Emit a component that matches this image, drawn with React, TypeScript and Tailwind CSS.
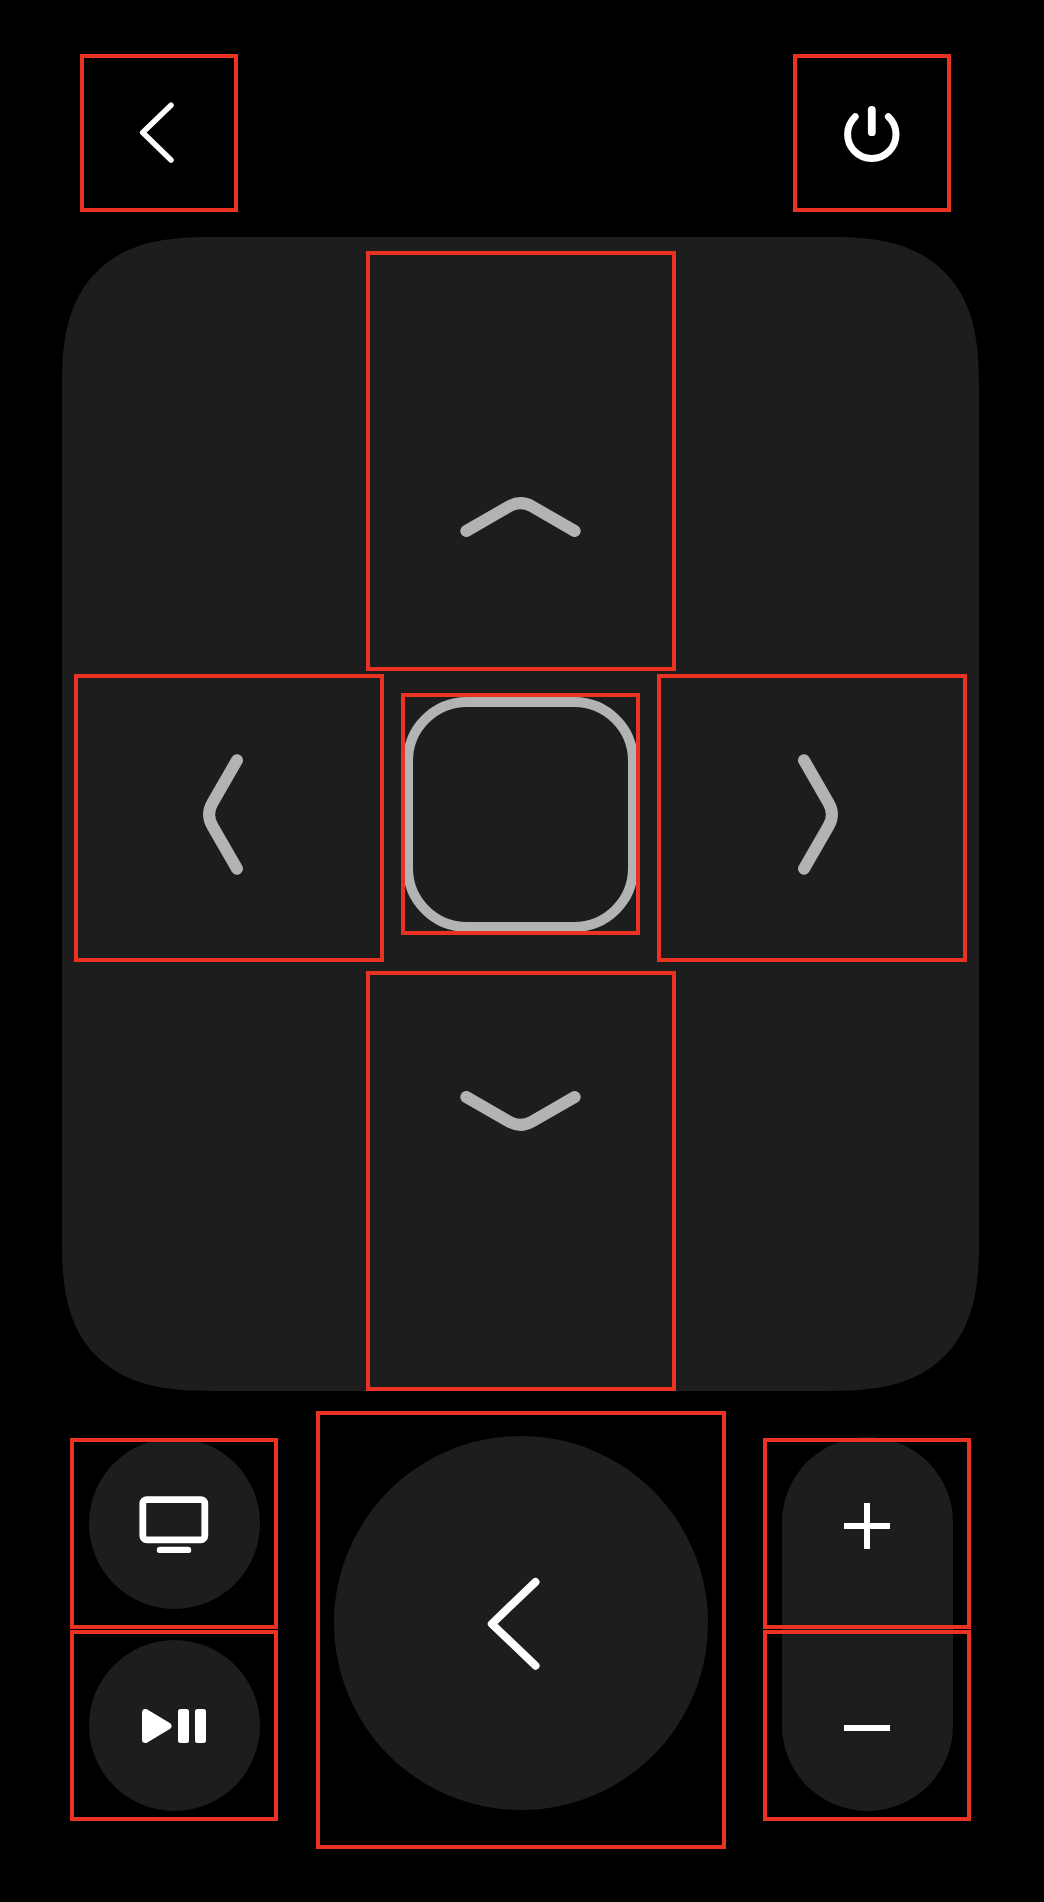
import type { ReactNode } from "react";

type PadProps = {
  label: string;
  className: string;
  children: ReactNode;
};

/* Touch area with its red bounds drawn over whatever it holds. */
function Pad({ label, className, children }: PadProps) {
  return (
    <button
      type="button"
      aria-label={label}
      className={`flex min-w-0 cursor-pointer justify-center outline-4 -outline-offset-4 outline-[#ea3323] ${className}`}
    >
      {children}
    </button>
  );
}

function Disc({ className, children }: { className: string; children: ReactNode }) {
  return (
    <span className={`flex aspect-square max-w-full items-center justify-center rounded-full bg-[#1d1d1e] ${className}`}>
      {children}
    </span>
  );
}

function BendVertical({ d }: { d: string }) {
  return (
    <svg width="121" height="40" viewBox="0 0 121 40" fill="none" stroke="#b3b3b3" strokeWidth="12" strokeLinecap="round" aria-hidden="true">
      <path d={d} />
    </svg>
  );
}

function BendHorizontal({ d }: { d: string }) {
  return (
    <svg width="40" height="121" viewBox="0 0 40 121" fill="none" stroke="#b3b3b3" strokeWidth="12" strokeLinecap="round" aria-hidden="true">
      <path d={d} />
    </svg>
  );
}

function Header() {
  return (
    <header className="flex justify-between pr-[93px] pl-20">
      <Pad label="Back" className="size-[158px] items-center">
        <svg width="64" height="64" viewBox="0 0 64 64" fill="none" stroke="#fff" strokeWidth="5.5" strokeLinecap="round" strokeLinejoin="round" aria-hidden="true">
          <path d="M44 4.2 15.7 31.6 44 59" />
        </svg>
      </Pad>
      <Pad label="Power" className="size-[158px] items-center">
        <svg width="64" height="64" viewBox="0 0 64 64" fill="none" stroke="#fff" strokeLinecap="round" aria-hidden="true">
          <path strokeWidth="7" d="M15.2 15.7a24.2 24.2 0 1 0 33.2 0" />
          <path strokeWidth="7.8" d="M31.8 8.8v22.4" />
        </svg>
      </Pad>
    </header>
  );
}

function DirectionPad() {
  return (
    <section
      aria-label="Direction pad"
      className="mt-[25px] mr-[65px] ml-[62px] flex flex-col items-center rounded-[115px] bg-[#1d1d1e] px-3 pt-3.5 supports-[corner-shape:squircle]:rounded-[150px] supports-[corner-shape:squircle]:[corner-shape:superellipse(1.4)]"
    >
      <Pad label="Up" className="h-[420px] w-[310px] max-w-full items-start pt-[246px]">
        <BendVertical d="M6.3 34 49 9.4Q60.5 2.8 72 9.4L114.7 34" />
      </Pad>
      <div className="mt-[3px] flex w-full items-center justify-between">
        <Pad label="Left" className="h-72 w-[310px] items-center pr-3 pb-2">
          <BendHorizontal d="M34 6.3 9.4 49Q2.8 60.5 9.4 72L34 114.7" />
        </Pad>
        <Pad label="Select" className="mb-2 h-[242px] w-[239px] items-center">
          <span className="size-[235px] max-w-full rounded-[64px] border-10 border-[#b3b3b3]" />
        </Pad>
        <Pad label="Right" className="h-72 w-[310px] items-center pb-2 pl-3">
          <BendHorizontal d="M6 6.3 30.6 49Q37.2 60.5 30.6 72L6 114.7" />
        </Pad>
      </div>
      <Pad label="Down" className="mt-[9px] h-[420px] w-[310px] max-w-full items-start pt-[120px]">
        <BendVertical d="M6.3 6 49 30.6Q60.5 37.2 72 30.6L114.7 6" />
      </Pad>
    </section>
  );
}

function Controls() {
  return (
    <section aria-label="Playback and volume" className="mt-5 flex items-start justify-between pr-[73px] pl-[70px]">
      <div className="flex min-w-0 flex-col gap-px pt-[27px]">
        <Pad label="TV home" className="h-[191px] w-[208px] max-w-full items-start">
          <Disc className="w-[171px]">
            <svg width="72" height="60" viewBox="0 0 72 60" fill="none" stroke="#fff" aria-hidden="true">
              <rect x="4.8" y="5.6" width="62" height="40.2" rx="4" strokeWidth="6.8" />
              <path d="M22 55.9h28" strokeWidth="6.4" strokeLinecap="round" />
            </svg>
          </Disc>
        </Pad>
        <Pad label="Play or pause" className="h-[191px] w-[208px] max-w-full items-start pt-2.5">
          <Disc className="w-[171px]">
            <svg width="64" height="34" viewBox="0 0 64 34" fill="#fff" aria-hidden="true">
              <path d="M3.5 3.5v27L26 17Z" stroke="#fff" strokeWidth="7" strokeLinejoin="round" />
              <rect x="36" width="11" height="34" rx="2.5" />
              <rect x="53" width="11" height="34" rx="2.5" />
            </svg>
          </Disc>
        </Pad>
      </div>

      <Pad label="Return" className="h-[438px] w-[410px] items-start pt-[25px]">
        <Disc className="w-[374px]">
          <svg width="96" height="96" viewBox="0 0 96 96" fill="none" stroke="#fff" strokeWidth="8" strokeLinecap="round" strokeLinejoin="round" aria-hidden="true">
            <path d="M62.5 7 18.8 48.8 62.5 90.7" />
          </svg>
        </Disc>
      </Pad>

      <div className="grid min-w-0 justify-items-center">
        <div className="col-start-1 row-start-1 mt-[26px] h-[374px] w-[171px] max-w-full rounded-full bg-[#1d1d1e]" />
        <div className="col-start-1 row-start-1 flex min-w-0 flex-col gap-px pt-[27px]">
          <Pad label="Volume up" className="h-[191px] w-[208px] max-w-full items-center pb-4">
            <svg width="46" height="46" viewBox="0 0 46 46" stroke="#fff" strokeWidth="6" aria-hidden="true">
              <path d="M0 23h46M23 0v46" />
            </svg>
          </Pad>
          <Pad label="Volume down" className="h-[191px] w-[208px] max-w-full items-center pt-1">
            <svg width="46" height="46" viewBox="0 0 46 46" stroke="#fff" strokeWidth="6" aria-hidden="true">
              <path d="M0 23h46" />
            </svg>
          </Pad>
        </div>
      </div>
    </section>
  );
}

export default function App() {
  return (
    <main className="min-h-screen bg-black pt-[54px] pb-10">
      <Header />
      <DirectionPad />
      <Controls />
    </main>
  );
}
